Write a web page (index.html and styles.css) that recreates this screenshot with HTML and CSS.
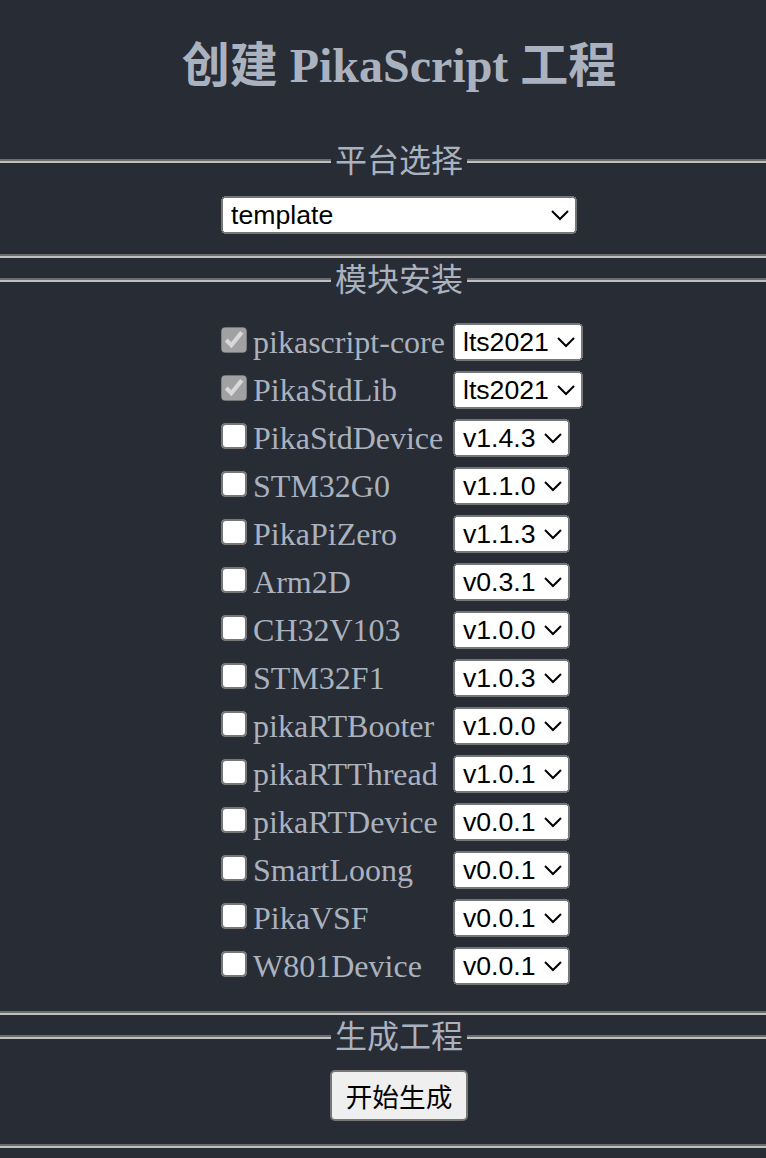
FILE: index.html
```html
<!DOCTYPE html>
<html lang="zh-CN">
<head>
<meta charset="utf-8">
<title>创建 PikaScript 工程</title>
<link rel="stylesheet" href="styles.css">
</head>
<body>
<h1 class="title">创建 PikaScript 工程</h1>

<fieldset class="section section-platform">
  <legend class="section-title">平台选择</legend>
  <select class="control platform"><option>template</option></select>
</fieldset>

<fieldset class="section section-modules">
  <legend class="section-title">模块安装</legend>
  <table class="modules">
    <tr><td class="name"><input class="check" type="checkbox" checked disabled><label>pikascript-core</label></td><td><select class="control"><option>lts2021</option></select></td></tr>
    <tr><td class="name"><input class="check" type="checkbox" checked disabled><label>PikaStdLib</label></td><td><select class="control"><option>lts2021</option></select></td></tr>
    <tr><td class="name"><input class="check" type="checkbox"><label>PikaStdDevice</label></td><td><select class="control"><option>v1.4.3</option></select></td></tr>
    <tr><td class="name"><input class="check" type="checkbox"><label>STM32G0</label></td><td><select class="control"><option>v1.1.0</option></select></td></tr>
    <tr><td class="name"><input class="check" type="checkbox"><label>PikaPiZero</label></td><td><select class="control"><option>v1.1.3</option></select></td></tr>
    <tr><td class="name"><input class="check" type="checkbox"><label>Arm2D</label></td><td><select class="control"><option>v0.3.1</option></select></td></tr>
    <tr><td class="name"><input class="check" type="checkbox"><label>CH32V103</label></td><td><select class="control"><option>v1.0.0</option></select></td></tr>
    <tr><td class="name"><input class="check" type="checkbox"><label>STM32F1</label></td><td><select class="control"><option>v1.0.3</option></select></td></tr>
    <tr><td class="name"><input class="check" type="checkbox"><label>pikaRTBooter</label></td><td><select class="control"><option>v1.0.0</option></select></td></tr>
    <tr><td class="name"><input class="check" type="checkbox"><label>pikaRTThread</label></td><td><select class="control"><option>v1.0.1</option></select></td></tr>
    <tr><td class="name"><input class="check" type="checkbox"><label>pikaRTDevice</label></td><td><select class="control"><option>v0.0.1</option></select></td></tr>
    <tr><td class="name"><input class="check" type="checkbox"><label>SmartLoong</label></td><td><select class="control"><option>v0.0.1</option></select></td></tr>
    <tr><td class="name"><input class="check" type="checkbox"><label>PikaVSF</label></td><td><select class="control"><option>v0.0.1</option></select></td></tr>
    <tr><td class="name"><input class="check" type="checkbox"><label>W801Device</label></td><td><select class="control"><option>v0.0.1</option></select></td></tr>
  </table>
</fieldset>

<fieldset class="section section-generate">
  <legend class="section-title">生成工程</legend>
  <button class="control generate" type="button">开始生成</button>
</fieldset>
</body>
</html>
```

FILE: styles.css
```css
html {
  zoom: 2;
}

body {
  margin: 0;
  background: #282c34;
  color: #abb2bf;
  font-family: "Liberation Serif", "Noto Sans CJK SC", serif;
  font-size: 16px;
  overflow-x: hidden;
}

.title {
  margin: 16px 0 19.5px;
  padding-left: 16px;
  text-align: center;
  font-size: 24px;
  line-height: 34px;
  font-weight: bold;
}

.section {
  margin: 0;
  min-width: 0;
  padding: 6.5px 0 10.5px 16px;
  border: 2px groove rgb(192, 192, 192);
  border-left: 0;
  border-right: 0;
  text-align: center;
}

.section-platform {
  padding-top: 6px;
  padding-bottom: 10px;
}

.section-modules {
  padding-top: 6.5px;
  padding-bottom: 10px;
}

.section-generate {
  padding-top: 5.5px;
  padding-bottom: 11.5px;
}

.section-title {
  margin: 0 auto;
  padding: 0 2px;
  line-height: 22px;
}

.control {
  font-family: "Liberation Sans", "Noto Sans CJK SC", sans-serif;
  font-size: 13.333px;
}

.platform {
  width: 178px;
}

.modules {
  margin: 0 auto;
  border-spacing: 2px;
  position: relative;
  left: -0.5px;
}

.modules td {
  padding: 1px;
  text-align: left;
  white-space: nowrap;
}

.check {
  margin: 3px 3px 3px 4px;
}
```
